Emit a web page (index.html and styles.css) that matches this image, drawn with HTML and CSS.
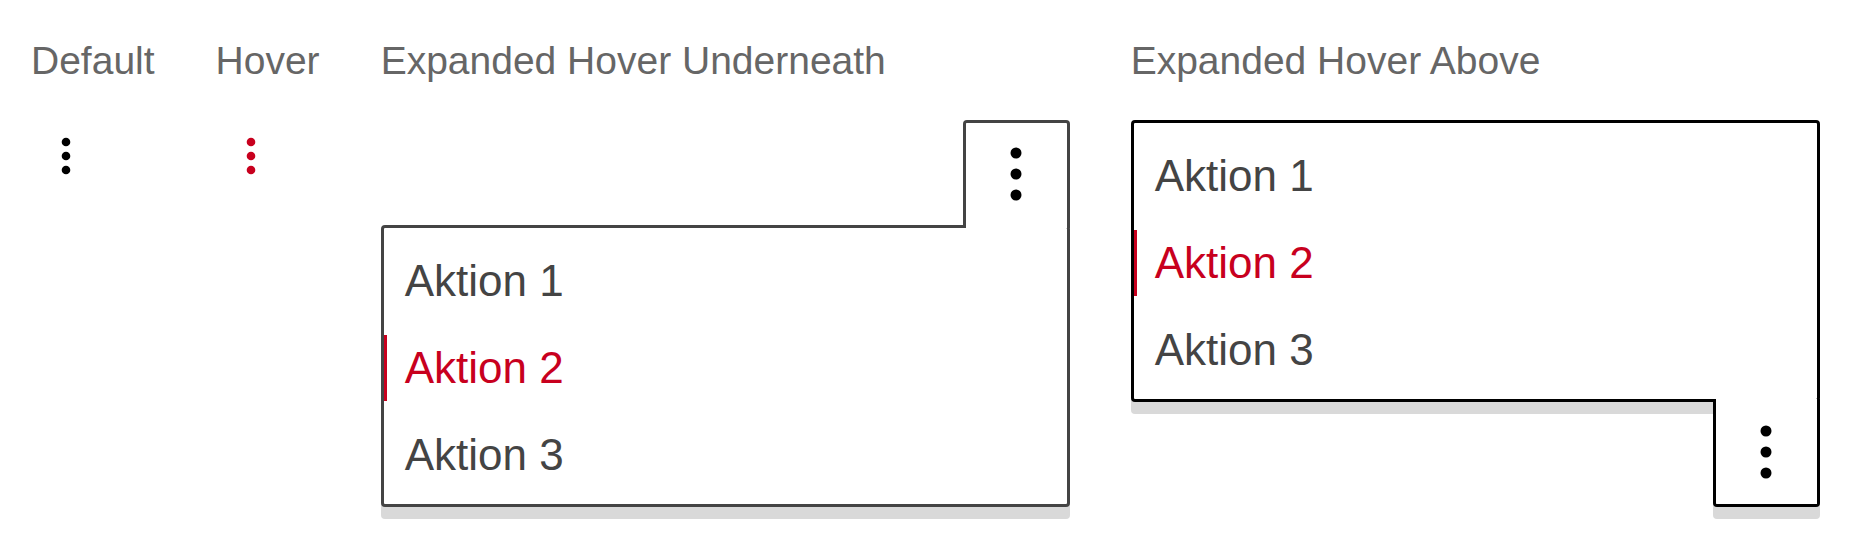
FILE: index.html
```html
<!DOCTYPE html>
<html lang="de">

<head>
    <meta charset="UTF-8">
    <meta name="viewport" content="width=device-width, initial-scale=1.0">
    <title>Kebab-Menü Zustände</title>
    <link rel="stylesheet" href="styles.css">
</head>

<body>
    <main class="states">
        <section class="state">
            <h2 class="state-title">Default</h2>
            <button type="button" class="kebab" aria-label="Menü öffnen">
                <svg class="dots-small" viewBox="0 0 10 38"><circle cx="5" cy="5" r="4.3"/><circle cx="5" cy="19" r="4.3"/><circle cx="5" cy="33" r="4.3"/></svg>
            </button>
        </section>

        <section class="state">
            <h2 class="state-title">Hover</h2>
            <button type="button" class="kebab kebab-hover" aria-label="Menü öffnen">
                <svg class="dots-small" viewBox="0 0 10 38"><circle cx="5" cy="5" r="4.3"/><circle cx="5" cy="19" r="4.3"/><circle cx="5" cy="33" r="4.3"/></svg>
            </button>
        </section>

        <section class="state">
            <h2 class="state-title">Expanded Hover Underneath</h2>
            <div class="menu menu-down">
                <button type="button" class="menu-toggle" aria-label="Menü schließen">
                    <svg class="dots-big" viewBox="0 0 12 54"><circle cx="6" cy="6" r="5.5"/><circle cx="6" cy="27" r="5.5"/><circle cx="6" cy="48" r="5.5"/></svg>
                </button>
                <ul class="menu-list">
                    <li class="menu-item">Aktion 1</li>
                    <li class="menu-item is-hover">Aktion 2</li>
                    <li class="menu-item">Aktion 3</li>
                </ul>
            </div>
        </section>

        <section class="state">
            <h2 class="state-title">Expanded Hover Above</h2>
            <div class="menu menu-up">
                <ul class="menu-list">
                    <li class="menu-item">Aktion 1</li>
                    <li class="menu-item is-hover">Aktion 2</li>
                    <li class="menu-item">Aktion 3</li>
                </ul>
                <button type="button" class="menu-toggle" aria-label="Menü schließen">
                    <svg class="dots-big" viewBox="0 0 12 54"><circle cx="6" cy="6" r="5.5"/><circle cx="6" cy="27" r="5.5"/><circle cx="6" cy="48" r="5.5"/></svg>
                </button>
            </div>
        </section>
    </main>
</body>

</html>
```

FILE: styles.css
```css
* {
    padding: 0;
    margin: 0;
    box-sizing: border-box;
}

button {
    font: inherit;
    border: 0;
    background: none;
    cursor: pointer;
}

body {
    font-family: "Liberation Sans", Arial, sans-serif;
    background-color: #fff;
}

.states {
    display: flex;
    align-items: flex-start;
    gap: 61px;
    padding: 38px 0 40px 31px;
}

.state {
    display: flex;
    flex-direction: column;
}

.state-title {
    font-size: 39px;
    font-weight: normal;
    line-height: 46px;
    color: #666;
    white-space: nowrap;
    margin-bottom: 36px;
}

.kebab {
    width: 70px;
    height: 72px;
    display: flex;
    align-items: center;
    justify-content: center;
    color: #000;
}

.kebab-hover {
    color: #c8001e;
}

.dots-small {
    width: 10px;
    height: 38px;
    fill: currentColor;
}

.dots-big {
    width: 12px;
    height: 54px;
    fill: #000;
}

.menu {
    width: 689px;
    display: flex;
    flex-direction: column;
    align-items: flex-end;
}

.menu-list {
    align-self: stretch;
    list-style: none;
    display: flex;
    flex-direction: column;
    gap: 21px;
    padding: 20px 0 16px;
    background-color: #fff;
    border: 3px solid #444;
    border-radius: 4px;
    box-shadow: 0 12px 0 #d9d9d9;
}

.menu-item {
    height: 66px;
    line-height: 66px;
    font-size: 44px;
    color: #444;
    padding-left: 18px;
    border-left: 3px solid transparent;
}

.menu-item.is-hover {
    color: #c8001e;
    border-left-color: #c8001e;
}

.menu-toggle {
    position: relative;
    z-index: 1;
    width: 107px;
    height: 108px;
    display: flex;
    align-items: center;
    justify-content: center;
    background-color: #fff;
}

.menu-down .menu-toggle {
    border: 3px solid #444;
    border-bottom: 0;
    border-radius: 4px 4px 0 0;
    margin-bottom: -3px;
    padding-bottom: 4px;
}

.menu-up .menu-list {
    border-color: #000;
}

.menu-up .menu-toggle {
    border: 3px solid #000;
    border-top: 0;
    border-radius: 0 0 4px 4px;
    margin-top: -3px;
    box-shadow: 0 12px 0 #d9d9d9;
}
```
